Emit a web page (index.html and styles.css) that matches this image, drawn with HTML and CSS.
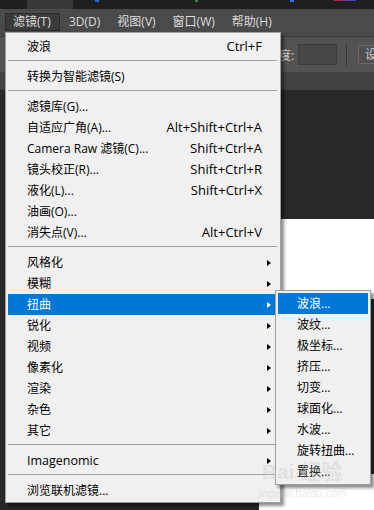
FILE: index.html
```html
<!DOCTYPE html>
<html lang="zh-CN">
<head>
<meta charset="utf-8">
<title>滤镜菜单</title>
<link rel="stylesheet" href="styles.css">
</head>
<body>
<div class="app">
  <div class="tabstrip">
    <span class="tab"></span>
    <span class="dot dot-blue d1"></span>
    <span class="dot dot-green d2"></span>
    <span class="dot dot-blue d3"></span>
    <span class="dot dot-grad d4"></span>
  </div>
  <div class="menubar">
    <span class="mb-item active">滤镜(T)</span>
    <span class="mb-item">3D(D)</span>
    <span class="mb-item">视图(V)</span>
    <span class="mb-item">窗口(W)</span>
    <span class="mb-item">帮助(H)</span>
  </div>
  <div class="options">
    <span class="opt-label">角度:</span>
    <span class="opt-input"></span>
    <span class="opt-divider"></span>
    <span class="opt-button">设</span>
  </div>
  <div class="doctabs"></div>
  <div class="workspace">
    <div class="canvas"><div class="photo"></div></div>
  </div>

  <div class="menu">
    <div class="item"><span class="label">波浪</span><span class="key">Ctrl+F</span><span class="arrow-cell"></span></div>
    <div class="sep"></div>
    <div class="item"><span class="label">转换为智能滤镜(S)</span><span class="arrow-cell"></span></div>
    <div class="sep"></div>
    <div class="item"><span class="label">滤镜库(G)...</span><span class="arrow-cell"></span></div>
    <div class="item"><span class="label">自适应广角(A)...</span><span class="key">Alt+Shift+Ctrl+A</span><span class="arrow-cell"></span></div>
    <div class="item"><span class="label">Camera Raw 滤镜(C)...</span><span class="key">Shift+Ctrl+A</span><span class="arrow-cell"></span></div>
    <div class="item"><span class="label">镜头校正(R)...</span><span class="key">Shift+Ctrl+R</span><span class="arrow-cell"></span></div>
    <div class="item"><span class="label">液化(L)...</span><span class="key">Shift+Ctrl+X</span><span class="arrow-cell"></span></div>
    <div class="item"><span class="label">油画(O)...</span><span class="arrow-cell"></span></div>
    <div class="item"><span class="label">消失点(V)...</span><span class="key">Alt+Ctrl+V</span><span class="arrow-cell"></span></div>
    <div class="sep"></div>
    <div class="item"><span class="label">风格化</span><span class="arrow-cell"><i class="tri"></i></span></div>
    <div class="item"><span class="label">模糊</span><span class="arrow-cell"><i class="tri"></i></span></div>
    <div class="item hl"><span class="label">扭曲</span><span class="arrow-cell"><i class="tri"></i></span></div>
    <div class="item"><span class="label">锐化</span><span class="arrow-cell"><i class="tri"></i></span></div>
    <div class="item"><span class="label">视频</span><span class="arrow-cell"><i class="tri"></i></span></div>
    <div class="item"><span class="label">像素化</span><span class="arrow-cell"><i class="tri"></i></span></div>
    <div class="item"><span class="label">渲染</span><span class="arrow-cell"><i class="tri"></i></span></div>
    <div class="item"><span class="label">杂色</span><span class="arrow-cell"><i class="tri"></i></span></div>
    <div class="item"><span class="label">其它</span><span class="arrow-cell"><i class="tri"></i></span></div>
    <div class="sep"></div>
    <div class="item"><span class="label latin">Imagenomic</span><span class="arrow-cell"><i class="tri"></i></span></div>
    <div class="sep"></div>
    <div class="item"><span class="label">浏览联机滤镜...</span><span class="arrow-cell"></span></div>
  </div>

  <div class="submenu">
    <div class="item hl"><span class="label">波浪...</span></div>
    <div class="item"><span class="label">波纹...</span></div>
    <div class="item"><span class="label">极坐标...</span></div>
    <div class="item"><span class="label">挤压...</span></div>
    <div class="item"><span class="label">切变...</span></div>
    <div class="item"><span class="label">球面化...</span></div>
    <div class="item"><span class="label">水波...</span></div>
    <div class="item"><span class="label">旋转扭曲...</span></div>
    <div class="item"><span class="label">置换...</span></div>
  </div>

  <div class="watermark">
    <div class="wm-big">Bai 经验</div>
    <div class="wm-small">jingyan.baidu.com</div>
  </div>
</div>
</body>
</html>
```

FILE: styles.css
```css
html, body {
  margin: 0;
  padding: 0;
}
body {
  background: #282828;
  font-family: "Open Sans", "Noto Sans CJK SC", sans-serif;
  font-size: 12px;
}
.app {
  position: relative;
  width: 374px;
  height: 510px;
  overflow: hidden;
  display: flex;
  flex-direction: column;
}

/* top strip */
.tabstrip {
  position: relative;
  height: 9px;
  background: #1f1f1f;
  flex: none;
}
.tab {
  position: absolute;
  left: 27px;
  top: 0;
  width: 46px;
  height: 9px;
  background: #383838;
}
.dot {
  position: absolute;
  top: 0;
  height: 2px;
}
.dot-blue { background: #2a6fd6; }
.dot-green { background: #3a8a3a; }
.dot-grad { background: linear-gradient(90deg, #c4203a, #3050d0); }
.d1 { left: 95px; width: 4px; }
.d2 { left: 195px; width: 3px; }
.d3 { left: 290px; width: 4px; }
.d4 { left: 334px; width: 22px; height: 1px; }

/* menubar */
.menubar {
  height: 28px;
  background: #4a4a4a;
  border-bottom: 1px solid #3a3a3a;
  display: flex;
  align-items: flex-start;
  padding: 4px 0 0 5px;
  box-sizing: border-box;
  flex: none;
  color: #dcdcdc;
}
.mb-item {
  height: 18px;
  line-height: 18px;
  padding: 0 8px;
  margin-right: 1px;
  box-sizing: border-box;
  font-size: 12px;
  flex: none;
}
.mb-item.active {
  background: #3b3b3b;
  border: 1px solid #2c2c2c;
  line-height: 16px;
  padding: 0 7px;
  width: 55px;
}

/* options bar */
.options {
  height: 36px;
  background: #535353;
  border-bottom: 1px solid #3e3e3e;
  display: flex;
  align-items: center;
  padding-left: 267px;
  box-sizing: border-box;
  flex: none;
  color: #d0d0d0;
}
.options > span {
  flex: none;
}
.opt-label {
  font-size: 12px;
  width: 30px;
}
.opt-input {
  width: 39px;
  height: 21px;
  background: #474747;
  border: 1px solid #3c3c3c;
  box-sizing: border-box;
  margin-left: 1px;
}
.opt-divider {
  width: 1px;
  height: 23px;
  background: #383838;
  margin-left: 9px;
}
.opt-button {
  margin-left: 11px;
  height: 19px;
  width: 30px;
  border: 1px solid #6a6a6a;
  border-radius: 3px;
  background: #4f4f4f;
  box-sizing: border-box;
  line-height: 17px;
  padding-left: 6px;
  font-size: 12px;
}

.doctabs {
  height: 17px;
  background: #424242;
  flex: none;
}

.workspace {
  flex: 1;
  display: flex;
  padding: 129px 0 0 259px;
  background: #282828;
}
.canvas {
  flex: 1;
  background: #ffffff;
  position: relative;
}
.photo {
  position: absolute;
  right: 0;
  top: 80px;
  width: 3px;
  height: 175px;
  background: #2a2a2a;
}

/* main menu */
.menu, .submenu {
  position: absolute;
  background: #f0f0f0;
  border: 1px solid #a0a0a0;
  box-shadow: 3px 3px 3px rgba(0, 0, 0, 0.45);
  color: #000;
  font-size: 12px;
}
.menu {
  left: 5px;
  top: 32px;
  width: 276px;
  box-sizing: border-box;
  padding: 3px 2px 1px 2px;
}
.item {
  height: 21px;
  display: flex;
  align-items: center;
  padding-left: 19px;
  white-space: nowrap;
}
.item .label {
  flex: 1;
  line-height: 21px;
}
.item .label.latin {
  font-size: 12.5px;
}
.item .key {
  line-height: 21px;
  font-size: 13px;
}
.arrow-cell {
  width: 16px;
  height: 21px;
  flex: none;
  display: flex;
  align-items: center;
  padding-left: 5px;
  box-sizing: border-box;
}
.tri {
  display: block;
  width: 0;
  height: 0;
  border-left: 4px solid #000;
  border-top: 3.5px solid transparent;
  border-bottom: 3.5px solid transparent;
}
.item.hl {
  background: #0078d7;
  color: #fff;
}
.item.hl .tri {
  border-left-color: #fff;
}
.sep {
  height: 1px;
  background: #a0a0a0;
  margin: 3px 1px 5px 0;
}

/* submenu */
.submenu {
  left: 275px;
  top: 290px;
  width: 96px;
  box-sizing: border-box;
  padding: 2px;
}

/* watermark */
.watermark {
  position: absolute;
  left: 256px;
  top: 458px;
  width: 92px;
  color: rgba(200, 200, 200, 0.4);
  font-family: "Liberation Sans", "Noto Sans CJK SC", sans-serif;
  text-align: center;
}
.wm-big {
  font-size: 21px;
  font-weight: bold;
  line-height: 28px;
  white-space: nowrap;
}
.wm-small {
  font-size: 11px;
  line-height: 14px;
  white-space: nowrap;
}
```
